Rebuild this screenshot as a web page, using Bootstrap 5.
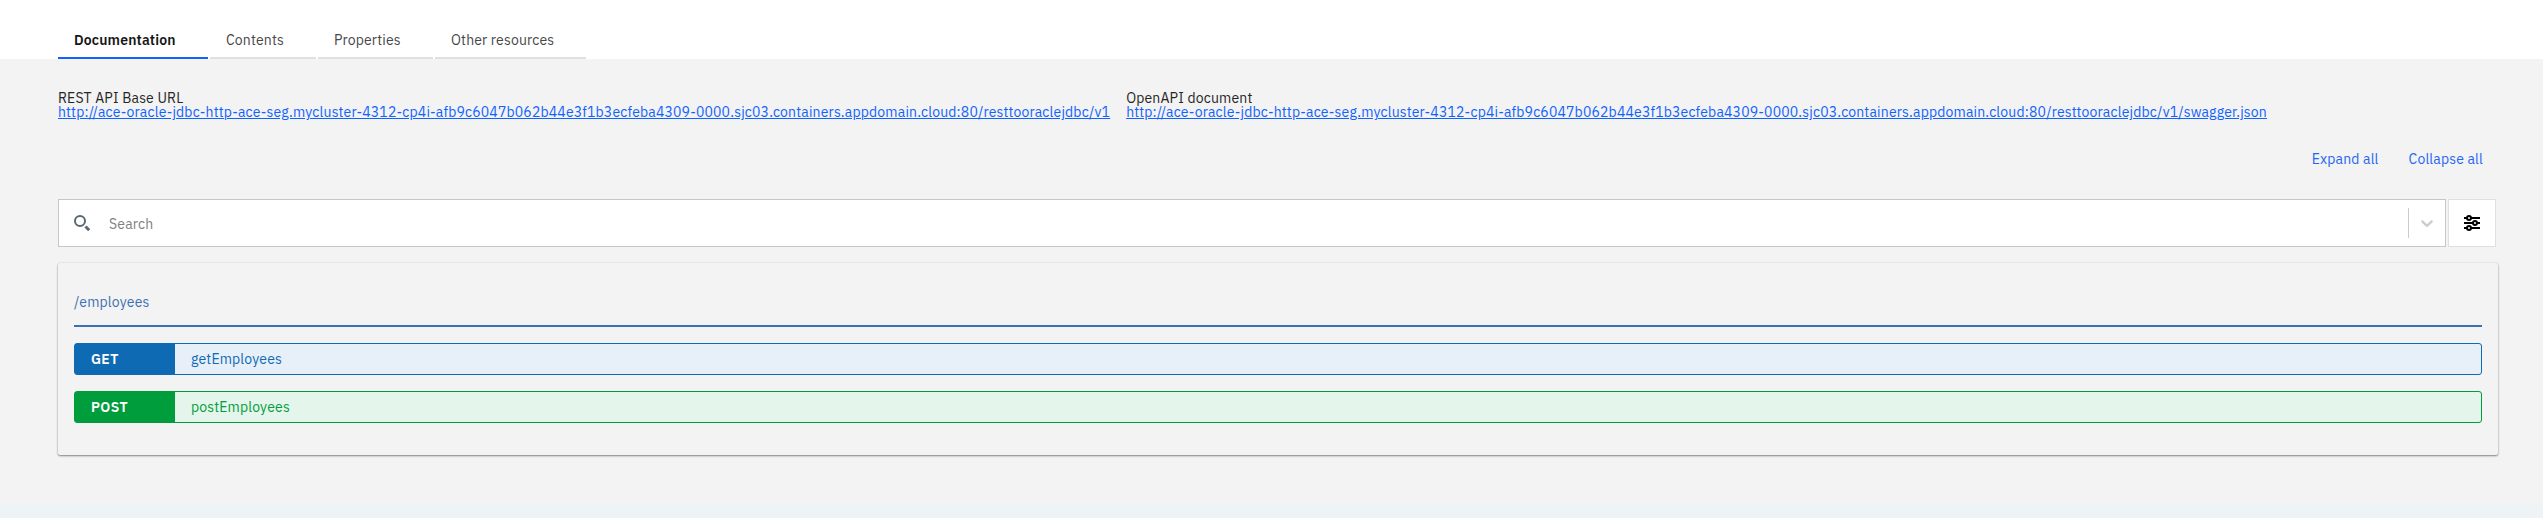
<!DOCTYPE html>
<html lang="en">
<head>
<meta charset="utf-8">
<title>REST API documentation</title>
<link rel="stylesheet" href="https://cdn.jsdelivr.net/npm/bootstrap@5.3.0/dist/css/bootstrap.min.css">
<style>
body{font:14px/18px "IBM Plex Sans",Roboto,sans-serif;letter-spacing:.16px;background:#eef3f6;color:#262626;height:518px;overflow:hidden}
.tabs-bar{height:59px;padding-left:58px;gap:2px}
.tabs-bar .nav-link{height:40px;padding:12px 0 0 16px;color:#474747;border-bottom:2px solid #e0e0e0;border-radius:0;white-space:nowrap}
.tabs-bar .nav-link.active{color:#161616;font-weight:600;border-color:#0f62fe}
.t1{width:150px}.t2{width:106px}.t3{width:115px}.t4{width:151px}
.api-page{height:444px;background:#f3f3f3;padding:32px 45px 0 58px}
.urls{line-height:14px;gap:16px;height:56px}
.urls a{color:#0f62fe;white-space:nowrap;letter-spacing:.166px}
.actions{gap:30px;padding:3px 15px 0 0;height:52px;color:#0f62fe}
.actions a{color:#1f66f5;text-decoration:none}
.search-row{height:48px;gap:2px;margin-right:2px}
.search-box{border:1px solid #c6c6c6;padding-left:15px}
.search-box .hint{color:#808080;margin-left:19px;padding-top:2px}
.divide{width:1px;height:30px;background:#ccc}
.filter-btn{width:48px;border:1px solid #e0e0e0}
.panel{margin-top:16px;width:2440px;height:192px;padding:30px 16px 0;border-radius:2px;box-shadow:0 1px 2px rgba(0,0,0,.45),0 0 2px rgba(0,0,0,.12)}
.path-title{height:34px;border-bottom:2px solid #3d70b2;color:#3d70b2;margin-bottom:16px}
.op{height:32px;border:1px solid;border-radius:3px;margin-bottom:16px;line-height:30px}
.op b{width:100px;padding-left:16px;color:#fff;font-weight:600;letter-spacing:.4px}
.op span{padding-left:16px}
.op-get{color:#0f6ab4;background:#e7f0f9}.op-get b{background:#0f6ab4}
.op-post{color:#009d3c;background:#e4f5eb}.op-post b{background:#009d3c}
</style>
<script src="https://cdn.jsdelivr.net/npm/bootstrap@5.3.0/dist/js/bootstrap.bundle.min.js"></script>
</head>
<body>
<nav class="tabs-bar nav bg-white align-items-end flex-nowrap">
<a class="nav-link active t1" href="#">Documentation</a>
<a class="nav-link t2" href="#">Contents</a>
<a class="nav-link t3" href="#">Properties</a>
<a class="nav-link t4" href="#">Other resources</a>
</nav>
<main class="api-page">
<div class="urls d-flex">
<div><div>REST API Base URL</div><a href="#">http://ace-oracle-jdbc-http-ace-seg.mycluster-4312-cp4i-afb9c6047b062b44e3f1b3ecfeba4309-0000.sjc03.containers.appdomain.cloud:80/resttooraclejdbc/v1</a></div>
<div><div>OpenAPI document</div><a href="#">http://ace-oracle-jdbc-http-ace-seg.mycluster-4312-cp4i-afb9c6047b062b44e3f1b3ecfeba4309-0000.sjc03.containers.appdomain.cloud:80/resttooraclejdbc/v1/swagger.json</a></div>
</div>
<div class="actions d-flex justify-content-end"><a href="#">Expand all</a><a href="#">Collapse all</a></div>
<div class="search-row d-flex">
<div class="search-box bg-white d-flex align-items-center flex-grow-1">
<svg width="16" height="16" viewBox="0 0 16 16" fill="none" stroke="#5a6872"><circle cx="6" cy="6" r="5" stroke-width="2"/><path d="M11.500 11.500l3.700 3.700" stroke-width="3"/></svg>
<span class="hint flex-grow-1">Search</span><span class="divide"></span>
<svg class="mx-2" width="20" height="20" viewBox="0 0 20 20" fill="#ccc"><path d="M4.516 7.548c.436-.446 1.043-.481 1.576 0l3.908 3.747 3.908-3.747c.533-.481 1.141-.446 1.574 0 .436.445.408 1.197 0 1.615-.406.418-4.695 4.502-4.695 4.502-.217.223-.502.335-.787.335s-.57-.112-.789-.335c0 0-4.287-4.084-4.695-4.502s-.436-1.170 0-1.615z"/></svg>
</div>
<div class="filter-btn bg-white d-flex align-items-center justify-content-center">
<svg width="16" height="16" viewBox="0 0 16 16" fill="#fff" stroke="#000" stroke-width="2"><path d="M0 3h16M0 8h16M0 13h16"/><circle cx="5" cy="3" r="2"/><circle cx="11" cy="8" r="2"/><circle cx="5" cy="13" r="2"/></svg>
</div>
</div>
<section class="panel">
<div class="path-title">/employees</div>
<div class="op op-get d-flex"><b>GET</b><span>getEmployees</span></div>
<div class="op op-post d-flex"><b>POST</b><span>postEmployees</span></div>
</section>
</main>
</body>
</html>
